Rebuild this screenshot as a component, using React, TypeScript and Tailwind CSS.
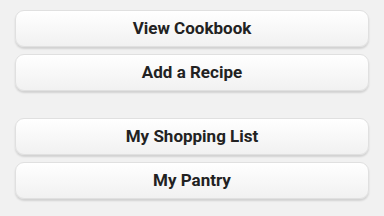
const items = ["View Cookbook", "Add a Recipe", null, "My Shopping List", "My Pantry"];

function MenuButton({ label }: { label: string }) {
  return (
    <button
      type="button"
      className="h-[37px] w-full rounded-[9px] border border-[#e0e0e0] bg-gradient-to-b from-white to-[#f1f1f1] text-[17px] font-bold text-[#222] shadow-[0_2px_2px_rgba(0,0,0,0.13)]"
    >
      {label}
    </button>
  );
}

export default function App() {
  return (
    <main
      className="flex h-[216px] w-[384px] flex-col gap-[7px] bg-[#f1f1f1] px-[15px] pt-[10px]"
      style={{ fontFamily: "Roboto, 'Liberation Sans', sans-serif" }}
    >
      {items.map((label, i) =>
        label ? <MenuButton key={i} label={label} /> : <div key={i} className="h-[13px]" />
      )}
    </main>
  );
}
